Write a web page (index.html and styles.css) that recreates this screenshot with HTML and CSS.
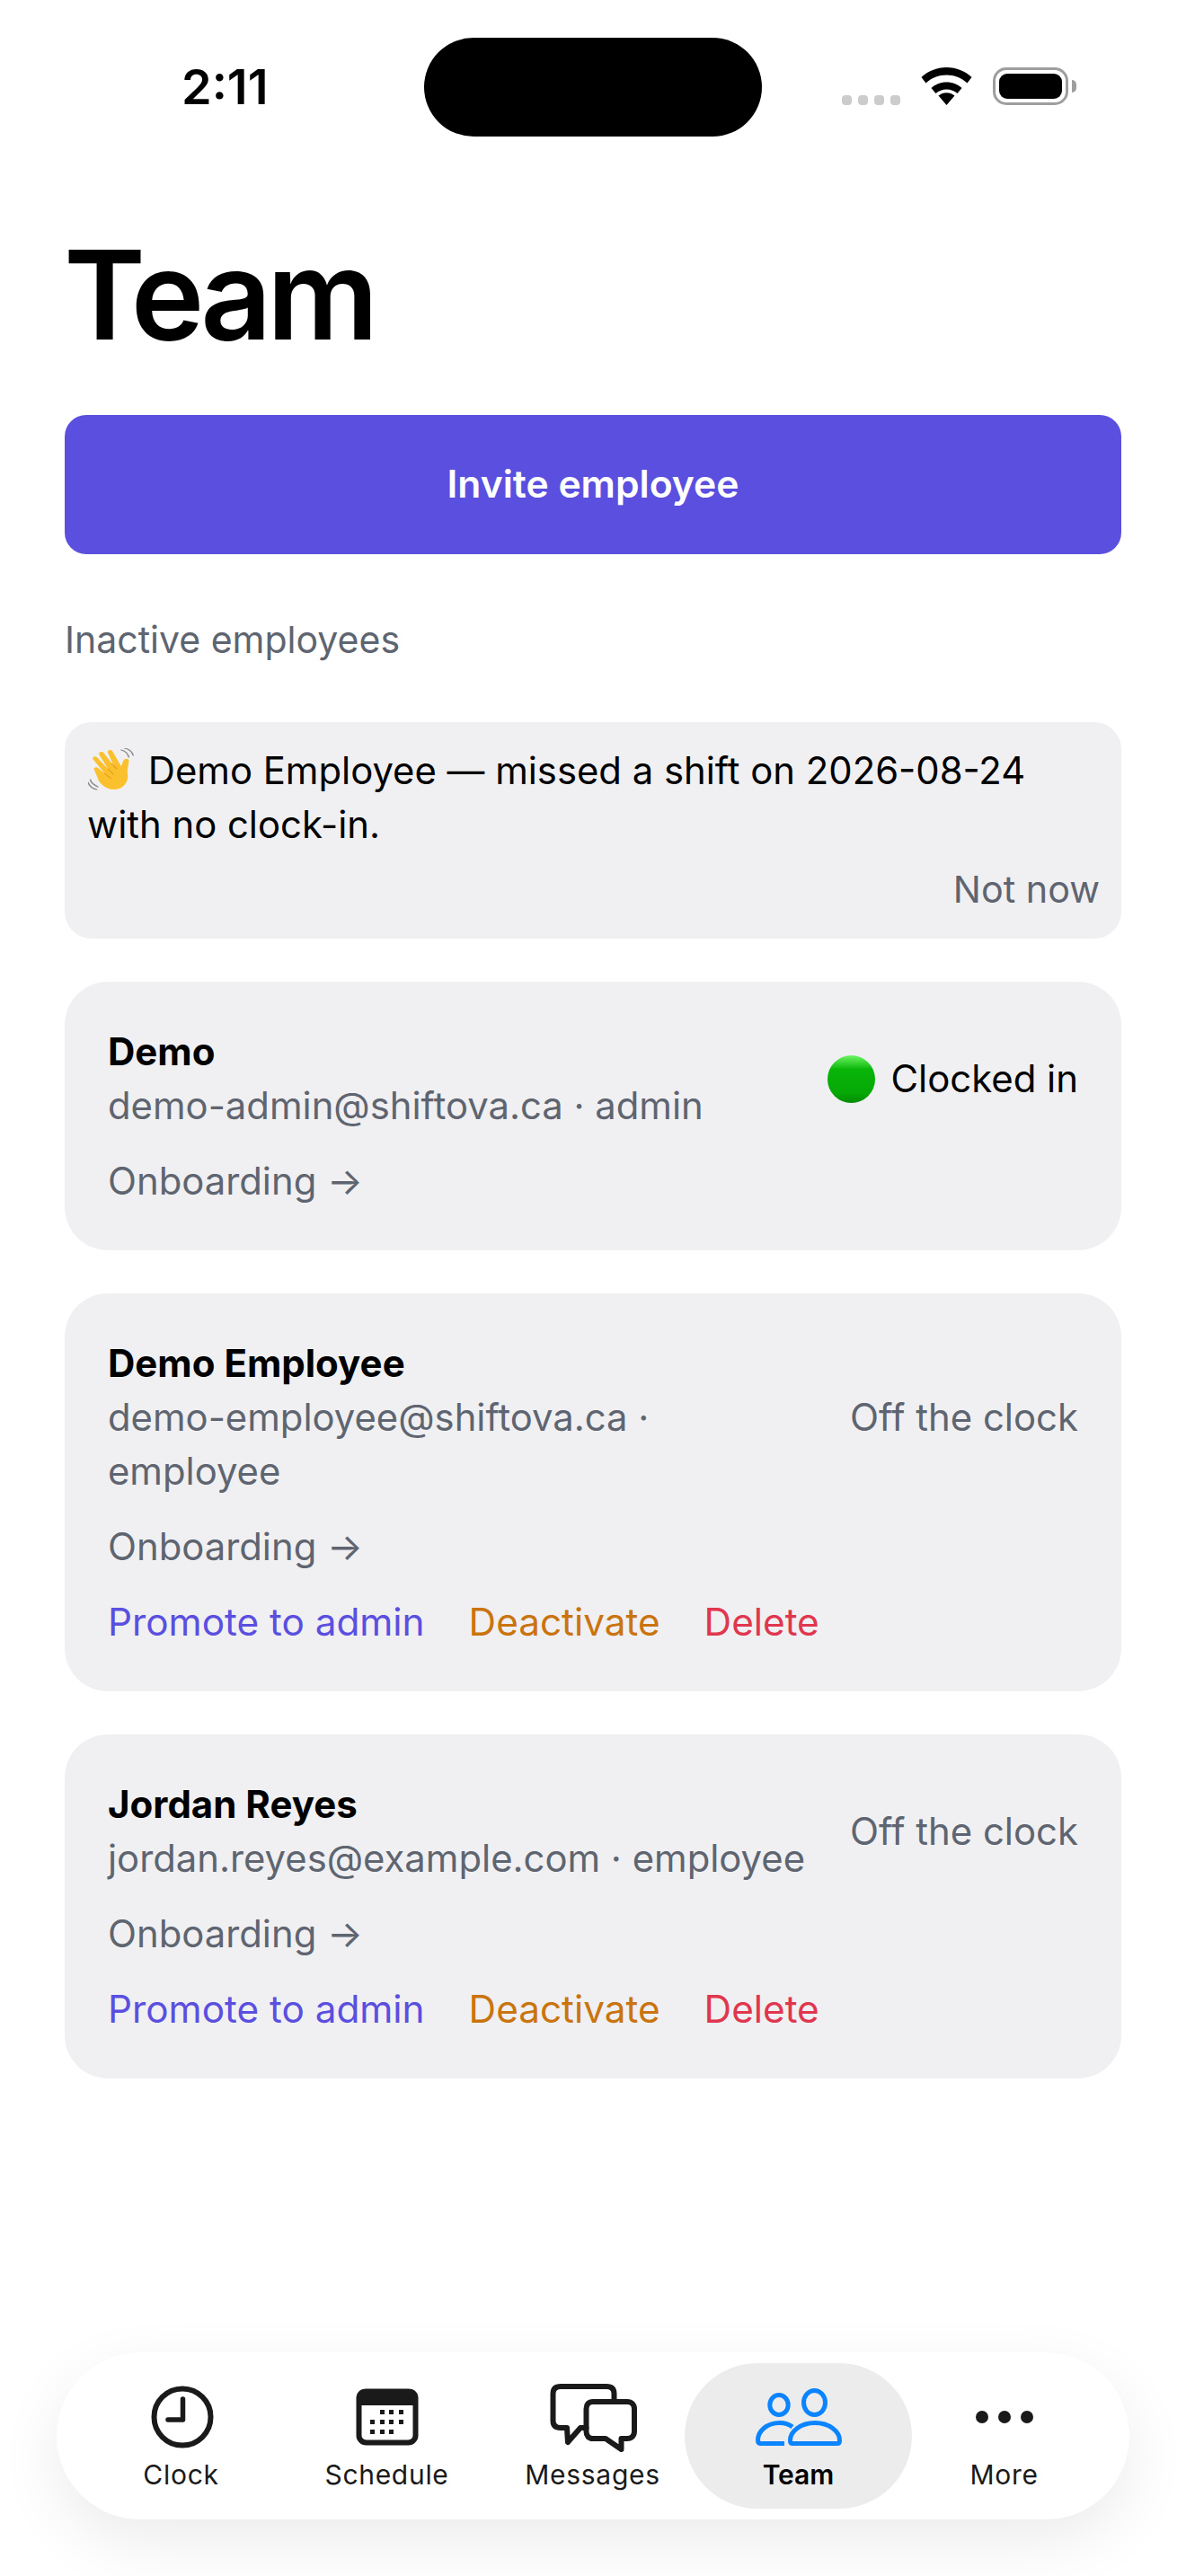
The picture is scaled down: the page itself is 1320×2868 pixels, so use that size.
FILE: index.html
```html
<!DOCTYPE html>
<html lang="en">
<head>
<meta charset="utf-8">
<title>Team</title>
<link rel="stylesheet" href="styles.css">
</head>
<body>
<div class="screen">
  <header class="status">
    <span class="time">2:11</span>
    <div class="island"></div>
    <div class="status-right">
      <div class="signal"><i></i><i></i><i></i><i></i></div>
      <svg class="wifi" viewBox="0 0 56 42"><path d="M28 42 19 31.500C24 27 32 27 37 31.500ZM28 16.500C35 16.500 40.500 19 45 23L40 29C36.500 26.200 32.500 24.500 28 24.500S19.500 26.200 16 29L11 23C15.500 19 21 16.500 28 16.500ZM28 0C39 0 48.500 4 56 11L51 17.500C44.500 11.500 36.500 8.500 28 8.500S11.500 11.500 5 17.500L0 11C7.500 4 17 0 28 0Z"/></svg>
      <div class="battery"><div class="battery-fill"></div></div>
      <div class="battery-cap"></div>
    </div>
  </header>

  <main class="content">
    <h1 class="title">Team</h1>
    <button class="invite">Invite employee</button>
    <p class="section-label">Inactive employees</p>

    <section class="alert">
      <p class="alert-text"><svg class="wave" viewBox="3 0 44 52" preserveAspectRatio="none"><g fill="none" stroke="#8a8a8a" stroke-width="1.200" stroke-linecap="round"><path d="M33 2c4 1 6 4 7 8M36 0c4 1 7 4 8 8"/><path d="M5 35c1 4 3 6 7 8M3 38c1 4 4 7 8 8"/></g><path fill="#fbc02d" d="M9 25c-2-2 1-5 3-3l6 6-10-15c-2-2 1-5 3-3l10 13-8-16c-1-3 3-4 4-2l9 14-5-14c-1-3 3-4 4-2l8 17 2-6c1-3 5-3 5 0 0 5-2 10-1 15 1 8-4 17-12 17-6 0-10-3-14-9z"/><path fill="none" stroke="#e09b15" stroke-width="1" d="M18 28l6 6M21 23l5 6M24 17l5 6"/></svg> Demo Employee — missed a shift on 2026-08-24 with no clock-in.</p>
      <div class="alert-action">Not now</div>
    </section>

    <article class="card">
      <div class="card-top">
        <div class="card-main">
          <div class="name">Demo</div>
          <div class="meta">demo-admin@shiftova.ca · admin</div>
        </div>
        <div class="state state-on"><span class="dot"></span>Clocked in</div>
      </div>
      <div class="onboard">Onboarding →</div>
    </article>

    <article class="card">
      <div class="card-top">
        <div class="card-main">
          <div class="name">Demo Employee</div>
          <div class="meta">demo-employee@shiftova.ca · employee</div>
        </div>
        <div class="state">Off the clock</div>
      </div>
      <div class="onboard">Onboarding →</div>
      <div class="actions"><span class="promote">Promote to admin</span><span class="deactivate">Deactivate</span><span class="delete">Delete</span></div>
    </article>

    <article class="card">
      <div class="card-top">
        <div class="card-main">
          <div class="name">Jordan Reyes</div>
          <div class="meta">jordan.reyes@example.com · employee</div>
        </div>
        <div class="state">Off the clock</div>
      </div>
      <div class="onboard">Onboarding →</div>
      <div class="actions"><span class="promote">Promote to admin</span><span class="deactivate">Deactivate</span><span class="delete">Delete</span></div>
    </article>
  </main>

  <nav class="tabs">
    <div class="tab">
      <svg class="tab-icon" viewBox="0 0 80 80"><circle cx="41" cy="40" r="31.500" fill="none" stroke="#1a1a1a" stroke-width="6"/><path d="M41.500 20V43H25" fill="none" stroke="#1a1a1a" stroke-width="5.500" stroke-linecap="round" stroke-linejoin="round"/></svg>
      <span>Clock</span>
    </div>
    <div class="tab">
      <svg class="tab-icon" viewBox="0 0 80 80"><rect x="8.500" y="11.500" width="63" height="57" rx="8" fill="none" stroke="#1a1a1a" stroke-width="6"/><path d="M6 20a9 9 0 0 1 9-11h50a9 9 0 0 1 9 11v7H6z" fill="#1a1a1a"/><g fill="#1a1a1a"><rect x="32" y="32" width="5" height="5"/><rect x="42" y="32" width="5" height="5"/><rect x="53" y="32" width="5" height="5"/><rect x="21" y="43" width="5" height="5"/><rect x="32" y="43" width="5" height="5"/><rect x="42" y="43" width="5" height="5"/><rect x="53" y="43" width="5" height="5"/><rect x="21" y="54" width="5" height="5"/><rect x="32" y="54" width="5" height="5"/><rect x="42" y="54" width="5" height="5"/></g></svg>
      <span>Schedule</span>
    </div>
    <div class="tab">
      <svg class="tab-icon msg" viewBox="0 0 100 80"><g fill="none" stroke="#1a1a1a" stroke-width="6" stroke-linejoin="round" stroke-linecap="round"><path d="M42.500 52H36L22 68 21 52H14C8 52 5.500 49 5.500 44V14C5.500 8 9 6 14 6H65C71 6 73.500 9 73.500 14V23"/><path d="M50 23H88C93 23 96 26 96 31V56C96 61 93 64 88 64H81.500V76L64 64H50C45 64 42.500 61 42.500 56V31C42.500 26 45 23 50 23Z"/></g></svg>
      <span>Messages</span>
    </div>
    <div class="tab active">
      <svg class="tab-icon team" viewBox="0 0 100 70"><g fill="none" stroke="#0a84ff" stroke-width="5" stroke-linecap="round"><ellipse cx="28" cy="20.500" rx="10.200" ry="11"/><ellipse cx="67.500" cy="18" rx="12" ry="13.500"/><path d="M43 45C39 42 35 40.500 29 40.500 14 40.500 4.500 50 4.500 60 4.500 62.500 6 63.500 8 63.500H34" stroke-linecap="butt"/><path d="M43 63.500H93C95 63.500 95.500 62 95.500 60 95.500 50 84 40.500 68 40.500S40.500 50 40.500 60C40.500 62 41 63.500 43 63.500Z"/></g></svg>
      <span>Team</span>
    </div>
    <div class="tab">
      <svg class="tab-icon" viewBox="0 0 80 80"><g fill="#1a1a1a"><circle cx="15" cy="40" r="7"/><circle cx="40" cy="40" r="7"/><circle cx="65" cy="40" r="7"/></g></svg>
      <span>More</span>
    </div>
  </nav>
</div>
</body>
</html>
```
FILE: styles.css
```css
* { box-sizing: border-box; }
html, body { margin: 0; padding: 0; background: #fff; }
body { font-family: Inter, "Liberation Sans", sans-serif; color: #000; }
.screen { position: relative; width: 1320px; height: 2868px; overflow: hidden; background: #fff; }

.status { display: flex; align-items: center; height: 194px; padding: 42px 0 42px 202px; }
.time { width: 270px; font-size: 54px; font-weight: 600; line-height: 110px; }
.island { width: 376px; height: 110px; border-radius: 55px; background: #000; }
.status-right { display: flex; align-items: flex-start; height: 110px; padding: 33px 0 0 89px; }
.signal { display: flex; gap: 7px; margin-top: 31px; }
.signal i { width: 11px; height: 11px; border-radius: 4px; background: #ccc; }
.wifi { width: 57px; height: 42px; margin-left: 23px; fill: #000; }
.battery { width: 84px; height: 42px; margin-left: 23px; padding: 4px; border: 3px solid #9e9e9e; border-radius: 15px; }
.battery-fill { height: 100%; border-radius: 9px; background: #000; }
.battery-cap { width: 5px; height: 14px; margin: 14px 0 0 4px; border-radius: 0 5px 5px 0; background: #9e9e9e; }

.content { padding: 0 72px; }
.title { margin: 59px 0 0 -1px; font-size: 138px; line-height: 150px; font-weight: 600; letter-spacing: -5.500px; }
.invite { display: block; width: 100%; height: 155px; margin-top: 59px; border: 0; border-radius: 24px; background: #5b4fe0; color: #fff; font: 600 42.600px/1 Inter, sans-serif; }
.section-label { margin: 65px 0 0; font-size: 41px; line-height: 60px; color: #5f6570; }

.alert { height: 241px; margin-top: 62px; padding: 24px 24px 0 25px; border-radius: 30px; background: #f0f0f2; }
.alert-text { margin: 0; font-size: 41.800px; line-height: 60px; }
.wave { display: inline-block; width: 54px; height: 52px; margin: 0 1px 0 1px; vertical-align: -12px; }
.alert-action { margin-top: 12px; text-align: right; font-size: 41.300px; line-height: 60px; color: #5f6570; }

.card { margin-top: 48px; padding: 48px 48px 47px; border-radius: 48px; background: #f0f0f2; }
.card-top { display: flex; align-items: center; gap: 40px; }
.card-main { flex: 1; min-width: 0; }
.name { font-size: 42px; line-height: 60px; font-weight: 700; }
.meta { font-size: 41.800px; line-height: 60px; color: #5f6570; }
.onboard { margin-top: 24px; font-size: 41.800px; line-height: 60px; color: #5f6570; }
.state { flex: none; display: flex; align-items: center; font-size: 41.900px; line-height: 60px; color: #5f6570; }
.state-on { color: #000; }
.dot { width: 53px; height: 53px; margin-right: 17px; border-radius: 50%; background: linear-gradient(#6cf562 0, #08b408 30%, #06a806 80%, #048a04 100%); }
.actions { display: flex; gap: 49px; margin-top: 24px; font-size: 42.300px; line-height: 60px; }
.promote { color: #5b4fe0; }
.deactivate { color: #c9740f; }
.delete { color: #e0364e; }

.tabs { position: absolute; left: 63px; top: 2619px; display: grid; grid-template-columns: repeat(5, 229px); align-items: center; width: 1194px; height: 186px; padding: 0 24px; border-radius: 93px; background: #fff; box-shadow: 0 24px 70px rgba(0,0,0,.08); }
.tab { position: relative; display: flex; flex-direction: column; align-items: center; height: 162px; color: #1a1a1a; font-size: 30px; font-weight: 400; letter-spacing: .7px; line-height: 40px; }
.tab > * { position: relative; }
.tab-icon { width: 80px; height: 80px; margin-top: 20px; margin-bottom: 4px; }
.tab-icon.msg { width: 100px; }
.tab-icon.team { width: 100px; height: 70px; margin-top: 26px; margin-bottom: 8px; }
.tab.active { color: #000; font-weight: 600; letter-spacing: 0; }
.tab.active::before { content: ""; position: absolute; top: 0; bottom: 0; left: -12px; right: -12px; border-radius: 81px; background: #ececec; }
```
